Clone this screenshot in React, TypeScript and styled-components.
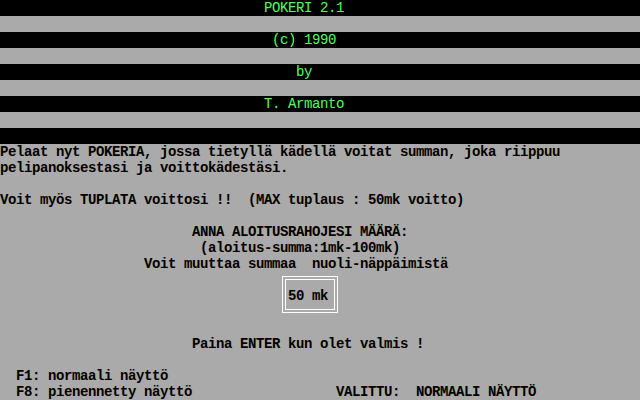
import React from "react";
import styled, { createGlobalStyle } from "styled-components";

const Global = createGlobalStyle`
  html, body { margin: 0; padding: 0; background: #000; }
  #root { width: 640px; height: 400px; }
`;

const Screen = styled.div`
  width: 640px;
  height: 400px;
  overflow: hidden;
  background: #aaaaaa;
  color: #000;
  font-family: "Liberation Mono", "DejaVu Sans Mono", monospace;
  font-weight: bold;
  font-size: 14px;
  letter-spacing: -0.4px;
  line-height: 16px;
  display: flex;
  flex-direction: column;
`;

const Line = styled.div<{ $dark?: boolean }>`
  height: 16px;
  display: grid;
  grid-template-columns: repeat(80, 8px);
  background: ${(p) => (p.$dark ? "#000" : "transparent")};
  color: ${(p) => (p.$dark ? "#55ff55" : "#000")};
  font-weight: ${(p) => (p.$dark ? "normal" : "bold")};
`;

const Text = styled.span<{ $col: number }>`
  grid-column: ${(p) => p.$col + 1} / span 1;
  white-space: pre;
`;

const BoxArea = styled.div`
  height: 48px;
  display: flex;
  align-items: flex-start;
  padding: 4px 0 0 282px;
  box-sizing: border-box;
`;

const OuterFrame = styled.div`
  border: 1px solid #ffffff;
  padding: 2px;
`;

const InnerFrame = styled.div`
  border: 1px solid #ffffff;
  width: 46px;
  height: 21px;
  padding: 8px 0 0 2px;
  white-space: pre;
`;

const Row = ({ col, text, dark }: { col?: number; text?: string; dark?: boolean }) => (
  <Line $dark={dark}>{text ? <Text $col={col ?? 0}>{text}</Text> : null}</Line>
);

export default function App() {
  return (
    <>
      <Global />
      <Screen>
        <Row dark col={33} text="POKERI 2.1" />
        <Row />
        <Row dark col={34} text="(c) 1990" />
        <Row />
        <Row dark col={37} text="by" />
        <Row />
        <Row dark col={33} text="T. Armanto" />
        <Row />
        <Row dark />
        <Row col={0} text="Pelaat nyt POKERIA, jossa tietyllä kädellä voitat summan, joka riippuu" />
        <Row col={0} text="pelipanoksestasi ja voittokädestäsi." />
        <Row />
        <Row col={0} text="Voit myös TUPLATA voittosi !!  (MAX tuplaus : 50mk voitto)" />
        <Row />
        <Row col={24} text="ANNA ALOITUSRAHOJESI MÄÄRÄ:" />
        <Row col={25} text="(aloitus-summa:1mk-100mk)" />
        <Row col={18} text="Voit muuttaa summaa  nuoli-näppäimistä" />
        <BoxArea>
          <OuterFrame>
            <InnerFrame>50 mk</InnerFrame>
          </OuterFrame>
        </BoxArea>
        <Row />
        <Row col={24} text="Paina ENTER kun olet valmis !" />
        <Row />
        <Row col={2} text="F1: normaali näyttö" />
        <Line>
          <Text $col={2}>F8: pienennetty näyttö</Text>
          <Text $col={42}>VALITTU:  NORMAALI NÄYTTÖ</Text>
        </Line>
      </Screen>
    </>
  );
}
